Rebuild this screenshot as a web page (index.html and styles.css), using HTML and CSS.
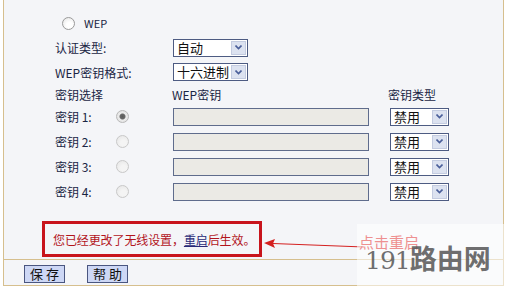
FILE: index.html
```html
<!DOCTYPE html>
<html lang="zh-CN">
  <head>
    <meta charset="UTF-8" />
    <title>无线安全设置</title>
    <link rel="stylesheet" href="styles.css">
  </head>
  <body>
    <div class="panel">
      <div class="row row-wep">
        <span class="radio"></span>
        <span class="wep-label">WEP</span>
      </div>
      <div class="row row-auth">
        <span class="label">认证类型:</span>
        <span class="select select-wide"><span class="value">自动</span><span class="arrow"></span></span>
      </div>
      <div class="row row-format">
        <span class="label">WEP密钥格式:</span>
        <span class="select select-wide"><span class="value">十六进制</span><span class="arrow"></span></span>
      </div>
      <div class="row row-head">
        <span class="label">密钥选择</span>
        <span class="col-key">WEP密钥</span>
        <span class="col-type">密钥类型</span>
      </div>
      <div class="row row-key">
        <span class="key-name">密钥 1:</span>
        <span class="radio checked"></span>
        <span class="text-box"></span>
        <span class="select select-type"><span class="value">禁用</span><span class="arrow"></span></span>
      </div>
      <div class="row row-key">
        <span class="key-name">密钥 2:</span>
        <span class="radio off"></span>
        <span class="text-box"></span>
        <span class="select select-type"><span class="value">禁用</span><span class="arrow"></span></span>
      </div>
      <div class="row row-key">
        <span class="key-name">密钥 3:</span>
        <span class="radio off"></span>
        <span class="text-box"></span>
        <span class="select select-type"><span class="value">禁用</span><span class="arrow"></span></span>
      </div>
      <div class="row row-key">
        <span class="key-name">密钥 4:</span>
        <span class="radio off"></span>
        <span class="text-box"></span>
        <span class="select select-type"><span class="value">禁用</span><span class="arrow"></span></span>
      </div>

      <div class="notice">您已经更改了无线设置，<a href="#" class="reboot">重启</a>后生效。</div>

      <div class="footer">
        <button class="btn">保存</button>
        <button class="btn">帮助</button>
      </div>
    </div>

    <svg class="arrow-note" width="100" height="12" viewBox="0 0 100 12">
      <path d="M9 4.5 L100 8" stroke="#d42020" stroke-width="1" fill="none" />
      <path d="M0 4 L11 0 L9 4.5 L11 9 Z" fill="#d42020" />
    </svg>
    <div class="watermark">
      <span class="hint">点击重启</span>
      <span class="wm-text"><span class="wm-num">191</span>路由网</span>
    </div>
  </body>
</html>
```

FILE: styles.css
```css
body {
  margin: 0;
  background: #ffffff;
  font-family: "Noto Sans CJK SC", sans-serif;
  font-size: 12px;
  color: #1a2544;
  width: 506px;
  height: 289px;
  overflow: hidden;
  position: relative;
}
.panel {
  margin-left: 3px;
  width: 499px;
  background: #f4f5f8;
  border-left: 1px solid #d6bf8e;
  border-right: 1px solid #d6bf8e;
  border-bottom: 1px solid #d6bf8e;
  padding-top: 11px;
}
.row {
  display: flex;
  align-items: center;
  padding-left: 51px;
  height: 24px;
}
.row-auth {
  height: 25px;
}
.row-head {
  height: 20px;
}
.row-key {
  height: 25px;
}
.row-wep {
  padding-left: 58px;
}
.wep-label {
  margin-left: 9px;
  font-size: 11px;
}
.label {
  width: 118px;
}
.col-key {
  width: 216px;
  margin-left: -1px;
}
.key-name {
  width: 61px;
}
.radio {
  width: 11px;
  height: 11px;
  border: 1px solid #9a9a9a;
  border-radius: 50%;
  background: radial-gradient(circle at 60% 65%, #ffffff 30%, #e3e3e3 100%);
}
.radio.off {
  border-color: #c8c8c8;
  background: radial-gradient(circle at 60% 65%, #f4f4f4 30%, #e4e4e4 100%);
}
.radio.checked {
  border-color: #b8b8b8;
  background: radial-gradient(circle at 50% 50%, #5a5a5a 0, #6a6a6a 2.5px, #ececec 3.5px, #dcdcdc 100%);
}
.row-key .radio {
  margin-right: 44px;
}
.select {
  display: flex;
  height: 16px;
  border: 1px solid #4d5b82;
  background: #ffffff;
  color: #111;
}
.select .value {
  flex: 1;
  padding-left: 3px;
  line-height: 16px;
  font-size: 13px;
}
.select .arrow {
  width: 15px;
  margin: 1px;
  background: #dce2f0 url("data:image/svg+xml;utf8,<svg xmlns='http://www.w3.org/2000/svg' width='7' height='5'><path d='M0.5 0.5 L3.5 3.5 L6.5 0.5' stroke='%234a5f9a' stroke-width='1.6' fill='none'/></svg>") center no-repeat;
  border: 1px solid #c3cbe0;
  box-sizing: border-box;
}
.select-wide {
  width: 73px;
}
.select-type {
  width: 57px;
  margin-left: 21px;
}
.text-box {
  width: 194px;
  height: 16px;
  border: 1px solid #5f6c8c;
  background: #ebeae5;
}
.notice {
  margin: 17px 0 2px 38px;
  width: 206px;
  height: 30px;
  border: 3px solid #c8141c;
  color: #b2141c;
  font-size: 12px;
  line-height: 31px;
  padding-left: 8px;
  white-space: nowrap;
  letter-spacing: -0.1px;
}
.reboot {
  color: #2a2a78;
}
.footer {
  border-top: 1px solid #d6bf8e;
  height: 25px;
  display: flex;
  align-items: flex-start;
  padding-left: 20px;
  gap: 22px;
}
.btn {
  margin-top: 5px;
  width: 41px;
  height: 18px;
  padding: 0;
  border: 1px solid #4a5680;
  background: #cdd7f5;
  font-family: "Noto Sans CJK SC", sans-serif;
  font-size: 13px;
  letter-spacing: 3px;
  line-height: 16px;
  color: #111;
  text-indent: 3px;
}
.arrow-note {
  position: absolute;
  left: 264px;
  top: 239px;
}
.watermark {
  position: absolute;
  left: 357px;
  top: 224px;
  width: 149px;
  height: 65px;
  background: rgba(255, 255, 255, 0.55);
  white-space: nowrap;
}
.hint {
  display: block;
  padding: 9px 0 0 2px;
  height: 17px;
  font-size: 15px;
  line-height: 17px;
  color: #ee9090;
}
.wm-text {
  display: block;
  margin-top: -6px;
  padding-left: 8px;
  font-size: 27px;
  font-weight: bold;
  line-height: 28px;
  color: rgba(85, 85, 85, 0.85);
}
.wm-num {
  font-family: "DejaVu Serif", serif;
  font-weight: normal;
  font-size: 25px;
  letter-spacing: -1px;
}
```
